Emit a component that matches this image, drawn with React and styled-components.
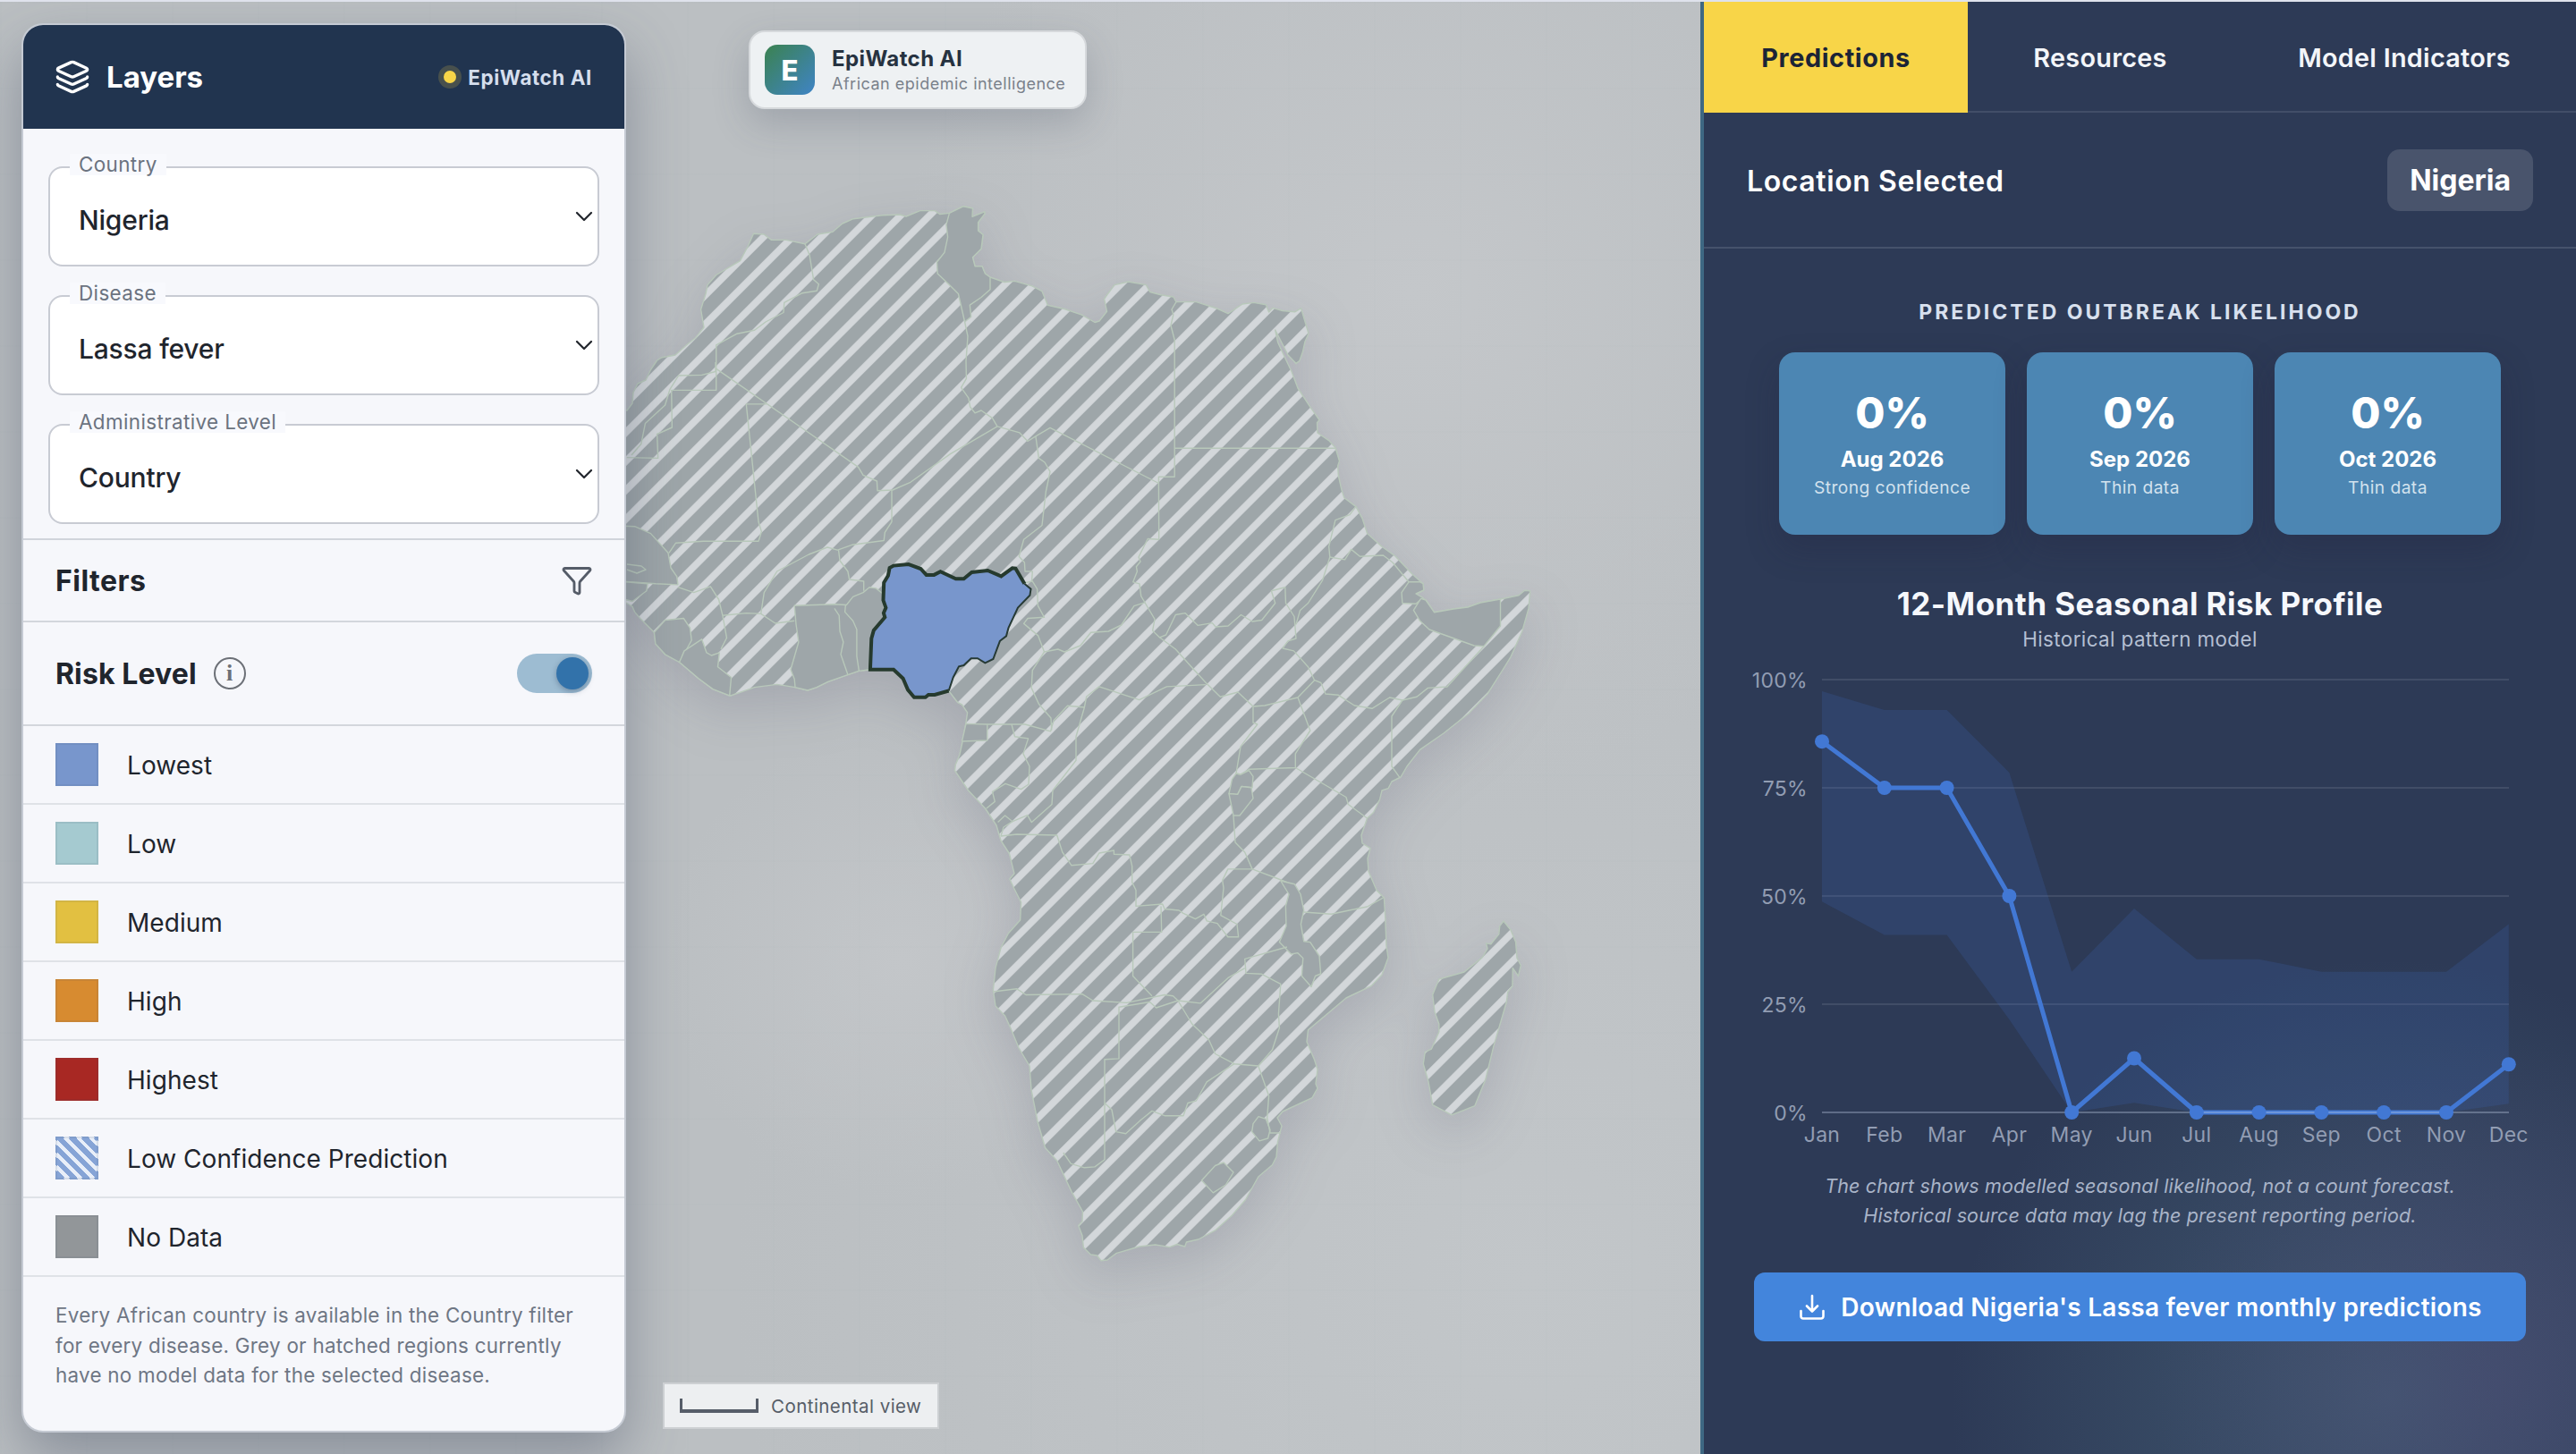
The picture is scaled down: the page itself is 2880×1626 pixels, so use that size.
import styled, { createGlobalStyle } from "styled-components";
import { Layers, Funnel, ChevronDown } from "lucide-react";

const LEVELS = [
  { label: "Lowest", color: "#7896cc" },
  { label: "Low", color: "#a5cad0" },
  { label: "Medium", color: "#e2c041" },
  { label: "High", color: "#d78b30" },
  { label: "Highest", color: "#a82823" },
  { label: "Low Confidence Prediction", hatched: true },
  { label: "No Data", color: "#929699" },
];

const FIELDS = [
  { label: "Country", value: "Nigeria" },
  { label: "Disease", value: "Lassa fever" },
  { label: "Administrative Level", value: "Country" },
];

const CARDS = [
  { month: "Aug 2026", value: "0%", note: "Strong confidence" },
  { month: "Sep 2026", value: "0%", note: "Thin data" },
  { month: "Oct 2026", value: "0%", note: "Thin data" },
];

// risk, upper bound and lower bound in percent
const SEASON = [
  { month: "Jan", risk: 85.7, high: 97.3, low: 48.7 },
  { month: "Feb", risk: 75, high: 93, low: 41 },
  { month: "Mar", risk: 75, high: 93, low: 41 },
  { month: "Apr", risk: 50, high: 78.5, low: 21.5 },
  { month: "May", risk: 0, high: 32.5, low: 0 },
  { month: "Jun", risk: 12.5, high: 47.1, low: 2.2 },
  { month: "Jul", risk: 0, high: 35.4, low: 0 },
  { month: "Aug", risk: 0, high: 35.4, low: 0 },
  { month: "Sep", risk: 0, high: 32.5, low: 0 },
  { month: "Oct", risk: 0, high: 32.5, low: 0 },
  { month: "Nov", risk: 0, high: 32.5, low: 0 },
  { month: "Dec", risk: 11.1, high: 43.5, low: 2 },
];

const MAINLAND =
  "M690 459 L701 459 707 451 708 439 713 429 722 425 727.5 413.5 734.6 403 740 399.7 755 397 768.6 385 777.5 378 787 366 783.6 346 789 328.5 791 318.6 800.7 307.5 827.5 291.7 836.4 275 842.5 261.3 854 262 862.5 268.4 879 268.4 900 272.8 914 262 931 259.3 941.8 250 954 244.7 986 240.7 1006 240 1013 242 1028.6 235.6 1045 235.6 1050.7 239.5 1061.4 238.4 1076.8 230.8 1087.5 233 1087 242.3 1100.7 236.8 1101 239 1093.6 248.6 1093.6 258 1099 262.5 1097 278.3 1087.5 287.8 1090 297.7 1098 297.7 1101.4 306 1107 310 1123 315.5 1134.6 314.3 1154 319.8 1165 325.7 1171.4 341.2 1190 345.5 1209.6 352.2 1224 360.5 1229 359 1237.5 348.3 1234.6 334.4 1236.8 331 1246 318.6 1261.4 315 1281.4 318.6 1285.7 326.5 1298 329.7 1311.8 332 1315 337.6 1337.5 337.6 1360.7 345 1373 350.6 1389 340 1401.8 338.4 1415.4 340.8 1418.6 349 1423 344.3 1434 347.5 1448 348.7 1454.6 344.7 1463 373 1459 382 1456.4 393.8 1452.9 403.6 1449 406.4 1440 397 1432.9 383 1425.7 369 1428.6 382.7 1434 394.5 1444 415.5 1451 434 1464 453.9 1475 469.7 1472.5 472.8 1473 484 1485.7 492.6 1492.9 500.5 1497.5 515.5 1495.7 521 1496.4 532 1500 548 1502.9 556.7 1516 566.6 1523 579.6 1528.6 596.6 1544.6 611 1560 622 1578.6 641.7 1591 652.7 1591.8 660 1583 664 1594 671 1603.6 684.8 1625 681 1641 679 1655 674 1677.5 670 1698 665.8 1704.6 660.3 1710.7 660.7 1709 680.4 1701.8 706 1689 734.6 1679.5 750 1663 776 1642 797.8 1614 820 1587.5 838.4 1573 857 1566 869 1556 874 1552 881.7 1545 884 1542.7 893.7 1535.6 908.5 1528.5 915 1522 934 1523 943 1532 948.7 1529 960 1530 974.5 1539 995.5 1547.4 1004 1548.8 1026.8 1550 1058 1552 1071 1545 1090 1533 1102.7 1505 1116 1483.7 1134 1462.5 1151.8 1461 1165 1469.5 1185 1473 1196 1471 1212 1473 1217 1467 1227.7 1434 1243 1428 1250 1433 1259 1428.5 1276.8 1427 1293.7 1422.4 1302.7 1406.8 1316 1392.6 1341.5 1377.5 1359 1358.6 1375.9 1339.8 1386 1326.5 1389 1324.7 1394 1316 1391.5 1307.7 1394.6 1291.6 1392 1273.7 1394 1247.7 1401.7 1238 1409 1231 1409.8 1226.5 1404 1219.4 1403 1211.4 1395 1210 1381.7 1205.7 1370.5 1210 1366 1210.5 1355 1198 1332.6 1181.7 1298 1168.5 1283.5 1160 1254 1153 1218.7 1151 1192 1139 1171.8 1129.8 1149.5 1123.6 1136 1113 1125 1110.4 1107 1113 1082.6 1119 1060 1127.4 1043.7 1140.6 1029 1141.6 1009 1133.5 993 1128.8 983 1134 976.8 1128.4 954.5 1119 940 1114 923 1101.5 904 1082.6 884 1067.5 861.6 1068.4 855 1073 843.7 1076.4 828 1080 808 1081.6 796.9 1075.5 788 1070.8 785.7 1061 773 1045 777 1038 777 1034.6 779.7 1022 779.7 1015 771.4 1009.6 758.7 999 748.8 972.9 748.8 960 750.4 947 754.8 925.7 762.3 913 768.6 903 772 889 768.6 868.6 765.4 843.6 768.6 816.8 778 797 770.6 781 758.7 759.6 740.5 743.6 731.8 732.9 720 731.4 707.3 715.7 691.5 709.6 684.4 707 678.4 700.7 674.5 690 668 Z";

const MADAGASCAR =
  "M1681 1030 L1689 1040 1694.6 1053.6 1696 1071.4 1700.3 1079.5 1697.5 1091.5 1691.3 1082.6 1690.9 1102.7 1685.7 1109.4 1684.3 1120.5 1670 1169.6 1660.7 1207.6 1648.9 1236.6 1623 1246.8 1601.7 1235.7 1597 1209.8 1591.3 1189.7 1593.2 1176.3 1600.3 1173.2 1608.8 1154 1608.8 1145 1604 1131.7 1601.7 1112.5 1608.8 1095 1637 1087 1657.4 1070.5 1663 1061 1661.6 1054.9 1666.8 1055.8 1675.8 1044.6 1676.7 1035.7 Z";

// countries without any model data
const NO_DATA = [
  // Tunisia
  "M1061.4 238.4 L1076.8 230.8 1087.5 233 1087 242.3 1100.7 236.8 1101 239 1093.6 248.6 1093.6 258 1099 262.5 1097 278.3 1087.5 287.8 1090 297.7 1098 297.7 1101.4 306 1107 310 1107 323.8 1097 332.5 1084.3 341.2 1085.7 354.2 1078.6 360 1071.4 328.5 1061.4 318.6 1048.2 306 1047.5 293 1056 282.2 1059.6 265.2 1057.9 251.4 Z",
  // Djibouti
  "M1575 650.8 L1567 662.6 1567.9 674.5 1582.9 675.3 1591 668.6 1583 664 1591.8 660 1591 652.7 1587.5 650.8 Z",
  // Somaliland
  "M1588.6 669.4 L1580.4 682.4 1587.5 694.3 1598 704 1648 722 1659 722.7 1677.5 700 1677.5 670 1655 674 1641 679 1625 681 1603.6 684.8 1594 671 Z",
  // Rwanda
  "M1382 865 L1377.5 871.4 1374 887.5 1383.7 888.4 1388 879.5 1400 880.8 1401 868.3 1396.4 861.6 1387 866 Z",
  // Burundi
  "M1374 887.5 L1379 912 1386 912 1401 892.9 1399 880.8 1388 879.5 1383.7 888.4 Z",
  // Malawi
  "M1431.8 985 L1447.4 988.8 1454 1000 1457.7 1017.8 1454.4 1033.5 1457.7 1052.7 1464.8 1053.6 1475 1069 1476.6 1089 1470.5 1091.5 1466 1103.5 1455.4 1091.5 1456.8 1071.4 1450.7 1065.6 1443.6 1067 1430.4 1053.6 1438 1035.7 1437.4 1013.4 1441 1000 Z",
  // Eswatini
  "M1407 1248.6 L1415.3 1251.3 1420 1263.4 1417.6 1273 1408 1275.9 1399.7 1265.6 1401 1256.7 Z",
  // Lesotho
  "M1368 1300 L1379 1311 1370.4 1325 1356.3 1333.9 1343.5 1320 1358.6 1303.5 Z",
  // Equatorial Guinea
  "M1080 809.4 L1103.8 810 1103.8 828 1075.5 829 Z",
  // Senegal
  "M690 588 L709.6 588.7 727.5 596.6 747 618.3 750 635 756.8 644.8 757.9 653.9 732.9 652.8 700.7 650.4 690 650 Z",
  // Guinea-Bissau
  "M690 650 L724 652.8 722.9 660.7 707 672.5 690 668 Z",
  // Sierra Leone
  "M731.4 707.3 L743.6 693.5 764.3 691.5 771.4 702.2 773.2 716 759.6 740.5 743.6 731.8 732.9 720 Z",
  // Liberia
  "M759.6 740.5 L765 727.9 784.6 714.8 790 729.9 795.4 733 804.3 729.9 802.5 745.7 817.5 757.5 815.7 778 797 770.6 781 758.7 Z",
  // Ghana, Togo and Benin
  "M888.2 677.3 L932.9 675.7 946.4 676.5 953.6 667.4 965 662.6 972 656.7 979.3 657.9 987 664 989.3 690.3 976.8 705 974.3 714 972.9 748.8 960 750.4 947 754.8 925.7 762.3 913 768.6 903 772 889 768.6 888.2 759.5 884 748.8 892.9 718 890 698 Z",
];

const BORDERS = [
  "M900 272.8 L905 285 909.6 312.7 915.4 317.8 913.2 325.3 897 327.7 876.8 338.4 876 349.5 856 360 843.6 369.2 824 373.2 800.7 385.8 800.7 436.4 750.7 436.4 751.4 478 734.6 485.5 735.7 512.4 700.7 511.6",
  "M800 405 L800 415.5 784.6 419.4 758.6 420 749 435.3 743.6 453 721.4 473.6 716.8 496.5 706 509",
  "M1078.6 360 L1082 376 1080 403.6 1080.4 423.4 1074.6 433.3 1082.9 445.2 1084.6 455 1090 461.8 1097 459 1109.6 467.7 1115 476.8 1140 483.9 1149 493.4 1157.9 487.9 1174 478.4 1294.6 540",
  "M1115 476.8 L1062.5 507.6 1017.9 539.3 997.9 548 981 548.8 980.4 538 965 531.4 959.6 522.3 900.7 481.5 800.7 412.3",
  "M1315 337.6 L1310 346 1311.8 352 1309 364 1313.2 380 1313.2 533.3 1295.4 533.3 1295.7 603.3 1283.2 602.5 1273 623 1275 628 1270.4 633.8 1271.4 639 1266.8 650.8 1274 652.8 1275.7 666.6 1280.4 674.5 1291 692.3 1288.6 705.3 1296.4 712.8 1314.3 726 1332 745.7 1348.2 763.5 1364.3 779.3 1384 774 1401 790",
  "M1313.2 501.3 L1492.9 501.3",
  "M1157.9 487.9 L1161.4 512.4 1168 517 1174 527.4 1169.3 550 1165 587.5 1144.6 603.3 1139.3 622.3 1145.4 629 1146 639 1154.3 639 1153.6 648.8 1159.6 658.7 1160.4 677.3 1167.5 690.3 1149 691.5 1144.6 697.4 1160.7 710.9 1167.5 729 1154.3 749.6 1153.2 769.4 1161.4 787.2 1175 803 1175.7 816.8",
  "M1145 652 L1154 650",
  "M1167.5 729 L1182.9 726 1190 729 1207.9 722 1219.6 707.3 1239.3 706 1253.6 699 1267.9 677.7 1280.4 673.7",
  "M1296.4 712.8 L1303.6 710 1314.3 687.5 1325 685.6 1339.3 699.4 1355.4 696.6 1359 701 1373 700 1387.5 687.5 1400 695 1410.7 693.5 1425.7 674.5 1421.4 660.7 1436.8 656.7 1437.5 674.5 1447 689.5 1449 714 1440 716.8 1434 725 1446.4 727.9 1462.5 745.7 1469.6 760.7 1451 780 1414 789 1401 790",
  "M1449 698.2 L1453.6 682.4 1462.5 674.5 1478.6 648.8 1486.8 623 1485.7 611.2 1492.9 581.6 1509 575.6 1516 566.6",
  "M1486.8 623 L1503.6 625.9 1510.7 614.4 1520.4 622.3 1546.4 621 1557 629 1575 650.8",
  "M1659 722.7 L1617.9 768 1596.4 769.4 1584 779.3 1567.9 783 1553.6 780 1534 792.3 1514.3 789 1496.4 777.3 1482 776 1476.8 763.5 1469.6 760.7",
  "M1567.9 783 L1556 801 1556 857 1565 869.6",
  "M1451 780 L1464.8 817 1448.3 842.9 1448.3 858.5 1396.4 860.3 1387 866 1382 865 1387 834.8 1405.8 810 1401 808 1401 790",
  "M1448.3 858.5 L1505 891.5 1507.3 899.5 1528.5 915",
  "M1379 912 L1381 942 1391.7 953 1400 971.9 1427 982 1438.9 986.6",
  "M1400 971.9 L1372.8 971.9 1366.7 984.4 1368 993 1364.8 1023.6 1383 1033.5 1384.6 1047.7 1372.8 1047.7 1361 1032.6 1349.2 1029.9 1345.9 1022.3 1336.5 1027.7 1323 1021.4 1318 1018 1302 1016.5 1299.7 1011 1270 1013.4 1270 995.5 1265.7 986.6 1265.7 968.7 1262.8 956 1245.4 955.3 1245.4 951 1228.9 954 1221.8 965.6 1198 967.8 1187.8 953 1181.7 934 1136.9 933 1119 935",
  "M1298 1013.4 L1298.7 1042.4 1266.6 1042.4 1266.6 1091.5 1287.9 1113.8",
  "M1110.4 1109 L1136.9 1105.8 1147 1112.5 1210 1111.6 1221.8 1119 1259.5 1121.4 1302 1112.5 1311.5 1113.8 1317 1119 1292.6 1127 1285.5 1120.5 1251 1126.3 1251 1183.9 1235 1184.8 1235 1296.8 1224 1304.9 1212.4 1305.8 1197.3 1301.3 1188.8 1289",
  "M1235 1233.5 L1243 1241 1247.7 1265.6 1258.6 1267.8 1276 1252 1287.9 1242.4 1302 1247.7 1323 1247.7 1328 1233.5 1337.4 1231 1349.2 1209.8 1379.9 1189.7",
  "M1317 1119 L1332.7 1145 1351.6 1163 1358.6 1178.5 1379.9 1189.7 1406.8 1192 1422.4 1174 1430.4 1149.5 1429.4 1134 1431.8 1100.4 1410.6 1089.3 1393 1088.4 1391.7 1072.3 1438.9 1059",
  "M1317 1119 L1342 1121.9 1372.8 1093.7 1391.7 1082.6",
  "M1406.8 1192 L1418.6 1225.4 1416.7 1250 1420 1267 1431.8 1267",
  "M1457.7 1020 L1488.4 1022.3 1509.7 1017.8 1528.5 1014 1547 1003.6",
  "M1103.8 810 L1146 810 1174.6 817.9 1178 805.8 1193.5 789.3 1212.4 791 1214.7 779 1228.9 767.9 1273.7 782.6 1304.4 767.9 1348 765.6",
  "M1131 810 L1134.5 823.7 1149.6 825.9 1144 842.9 1151 857 1150 877 1141.6 882.6 1124 876.3 1109.5 885.3 1112.3 896.4 1102.9 904",
  "M1212.4 791 L1203 823.7 1203 850.4 1177 884 1176 899.5 1153.4 919.6 1148.7 911.6 1132 918.7 1123.6 912 1115.6 919.6",
  "M1132 918.7 L1122 925 1119 935",
  "M857 451.9 L834.3 451.9 848 583.5 851.4 594.6 848 605.3 786.4 605.3 755.4 607.3 747.9 618.3",
  "M757.9 656.7 L775.7 662.6 794.3 655.9 803.6 670.5 807.9 688.3 812.5 713.3 806 725.9",
  "M807.9 688.3 L834.6 685.6 850.7 686.4 866.8 697 888.2 694.3",
  "M850.7 686.4 L854.3 662.6 868.6 639 904.3 620 925 612 936.4 615.2 952.5 609.3 988.2 604.5 989.3 595.4 997 583.5 997 548",
  "M937.5 615.2 L939 627 947.9 639 949.6 648 965.7 650 965.7 660.7",
  "M932.9 680.4 L938.2 688.3 939 706 942.9 718 940 731.8 947.9 754.4",
  "M945.4 676.5 L944.6 684.4 953.6 694.3 957.9 704 957.9 733.8 960.4 750.4",
  "M701 631 L717 633 722 637 712 641 701 637",
];

const NIGERIA_WEST =
  "M1060.7 772.5 L1045 777 1038 777 1034.6 779.7 1022 779.7 1015 771.4 1009.6 758.7 999 748.8 972.9 748.8 974.3 714 976.8 705 989.3 690.3 987.9 685.6 990.4 679.6 987.5 671.3 988.2 651.6 992.9 643.7 994.6 635 999 632.6 1015.7 631 1029.3 636 1035.7 642.9 1044.3 642.9 1051.4 639.3 1068.6 647.2 1077.5 647.2 1086.4 640 1104.3 638 1119.3 644.4 1131.8 635.3 1135.4 635.7 1145.4 652.8";
const NIGERIA_EAST =
  " 1152.5 658.7 1151.4 665.8 1138 679.6 1127.5 702.2 1125 711.3 1117.9 716.8 1110.4 737 1101.4 741.3 1092.9 736.2 1085.7 736.2 1077.5 744 1072 745.3 1065.7 757.5 1060.7 772.5";

export default function App() {
  return (
    <>
      <GlobalStyle />
      <Page>
        <MapArea>
          <AfricaMap />
          <LayersPanel />
          <Brand />
          <ScaleBar>
            <Ruler />
            Continental view
          </ScaleBar>
        </MapArea>
        <Sidebar />
      </Page>
    </>
  );
}

function AfricaMap() {
  return (
    <MapSvg viewBox="0 2 1901 1624">
      <defs>
        <pattern
          id="hatch"
          width="22.84"
          height="22.84"
          patternUnits="userSpaceOnUse"
          patternTransform="translate(1160 960) rotate(45)"
        >
          <rect width="22.84" height="22.84" fill="#9ea6a9" />
          <rect width="3.9" height="22.84" fill="#d3d7da" />
          <rect x="18.94" width="3.9" height="22.84" fill="#d3d7da" />
        </pattern>
      </defs>
      <Land>
        <path d={MAINLAND} fill="url(#hatch)" />
        <path d={MADAGASCAR} fill="url(#hatch)" />
        {NO_DATA.map((d) => (
          <path key={d} d={d} fill="#9ea6a9" />
        ))}
        {BORDERS.map((d) => (
          <path key={d} d={d} fill="none" />
        ))}
      </Land>
      <path d={NIGERIA_WEST + NIGERIA_EAST + "Z"} fill="#7896cc" />
      <path
        d={"M1145.4 652.8 L" + NIGERIA_EAST}
        fill="none"
        stroke="#263a35"
        strokeWidth="2"
      />
      <path d={NIGERIA_WEST} fill="none" stroke="#263a2e" strokeWidth="4" />
    </MapSvg>
  );
}

function LayersPanel() {
  return (
    <Panel>
      <PanelHeader>
        <Layers size={40} strokeWidth={2} />
        <PanelTitle>Layers</PanelTitle>
        <Status>
          <Dot />
          EpiWatch AI
        </Status>
      </PanelHeader>
      <Fields>
        {FIELDS.map((field) => (
          <Field key={field.label}>
            <FieldLabel>{field.label}</FieldLabel>
            <FieldValue>{field.value}</FieldValue>
            <ChevronDown size={32} strokeWidth={1.7} />
          </Field>
        ))}
      </Fields>
      <SectionRow $height={92}>
        <SectionTitle $spacing={0.5}>Filters</SectionTitle>
        <FilterIcon>
          <Funnel size={36} strokeWidth={1.9} />
        </FilterIcon>
      </SectionRow>
      <SectionRow $height={116}>
        <SectionTitle $spacing={0.1}>Risk Level</SectionTitle>
        <Info>i</Info>
        <Toggle>
          <Thumb />
        </Toggle>
      </SectionRow>
      <ul>
        {LEVELS.map((level) => (
          <LevelRow key={level.label}>
            <Swatch $color={level.color} $hatched={level.hatched} />
            <LevelName>{level.label}</LevelName>
          </LevelRow>
        ))}
      </ul>
      <PanelNote>
        Every African country is available in the Country filter
        <br />
        for every disease. Grey or hatched regions currently
        <br />
        have no model data for the selected disease.
      </PanelNote>
    </Panel>
  );
}

function Brand() {
  return (
    <BrandCard>
      <Logo>E</Logo>
      <div>
        <BrandName>EpiWatch AI</BrandName>
        <BrandTag>African epidemic intelligence</BrandTag>
      </div>
    </BrandCard>
  );
}

function Sidebar() {
  return (
    <Side>
      <Tabs>
        <Tab $active>Predictions</Tab>
        <Tab>Resources</Tab>
        <Tab>Model Indicators</Tab>
      </Tabs>
      <Location>
        <LocationLabel>Location Selected</LocationLabel>
        <LocationBadge>Nigeria</LocationBadge>
      </Location>
      <Overline>PREDICTED OUTBREAK LIKELIHOOD</Overline>
      <Cards>
        {CARDS.map((card) => (
          <Card key={card.month}>
            <CardValue>{card.value}</CardValue>
            <CardMonth>{card.month}</CardMonth>
            <CardNote>{card.note}</CardNote>
          </Card>
        ))}
      </Cards>
      <ChartTitle>12-Month Seasonal Risk Profile</ChartTitle>
      <ChartSubtitle>Historical pattern model</ChartSubtitle>
      <SeasonChart />
      <ChartNote>
        The chart shows modelled seasonal likelihood, not a count forecast.
        <br />
        Historical source data may lag the present reporting period.
      </ChartNote>
      <DownloadButton>
        <svg
          width="32"
          height="32"
          viewBox="0 0 32 32"
          fill="none"
          stroke="currentColor"
          strokeWidth="2.6"
          strokeLinecap="round"
          strokeLinejoin="round"
        >
          <path d="M16 3v17M10 14.500l6 6 6-6M3.500 20v6a2.500 2.500 0 0 0 2.500 2.500h20a2.500 2.500 0 0 0 2.500-2.500v-6" />
        </svg>
        Download Nigeria's Lassa fever monthly predictions
      </DownloadButton>
    </Side>
  );
}

function SeasonChart() {
  const x = (i) => 132 + i * 69.8;
  const y = (v) => 504 - v * 4.84;
  const points = (key) => SEASON.map((s, i) => `${x(i)},${y(s[key])}`);
  const band = [...points("high"), ...points("low").reverse()].join(" ");

  return (
    <Chart viewBox="0 0 975 560">
      {[100, 75, 50, 25, 0].map((tick) => (
        <g key={tick}>
          {tick > 0 && (
            <line x1="132" x2="900" y1={y(tick)} y2={y(tick)} stroke="#414d67" strokeWidth="2" />
          )}
          <text x="116" y={y(tick) + 9} textAnchor="end">
            {tick}%
          </text>
        </g>
      ))}
      <polygon points={band} fill="rgba(62, 106, 190, 0.2)" />
      <polyline
        points={points("risk").join(" ")}
        fill="none"
        stroke="#4278d4"
        strokeWidth="5"
        strokeLinejoin="round"
      />
      <line x1="132" x2="900" y1={y(0)} y2={y(0)} stroke="rgba(190, 203, 225, 0.35)" strokeWidth="2" />
      {SEASON.map((s, i) => (
        <g key={s.month}>
          <circle cx={x(i)} cy={y(s.risk)} r="8" fill="#4278d4" />
          <text x={x(i)} y="537" textAnchor="middle">
            {s.month}
          </text>
        </g>
      ))}
    </Chart>
  );
}

const GlobalStyle = createGlobalStyle`
  * {
    box-sizing: border-box;
    margin: 0;
    padding: 0;
  }

  body {
    font-family: Inter, "Liberation Sans", sans-serif;
    color: #1f252d;
    overflow: hidden;
  }

  ul {
    list-style: none;
  }
`;

const Page = styled.main`
  display: flex;
  width: 2880px;
  height: 1626px;
  border-top: 2px solid #dfe2ec;
`;

const MapArea = styled.section`
  position: relative;
  flex: 1;
  overflow: hidden;
  background:
    linear-gradient(rgba(150, 165, 160, 0.03) 2px, transparent 2px) 0 0 / 96px 96px,
    linear-gradient(90deg, rgba(150, 165, 160, 0.03) 2px, transparent 2px) 0 0 / 96px 96px,
    radial-gradient(circle at 83% 20%, #c4c7ca, transparent 28%),
    radial-gradient(circle at 53% 66%, #c3c6c9, transparent 18%),
    radial-gradient(circle at 90% 88%, #c2c6c9, transparent 40%),
    #bbbfc2;
`;

const MapSvg = styled.svg`
  display: block;
  width: 1901px;
  height: 1624px;
`;

const Land = styled.g`
  stroke: #b8c8ba;
  stroke-width: 1.4;
  stroke-linejoin: round;
  filter: drop-shadow(0 20px 28px rgba(80, 80, 105, 0.2));
`;

const Panel = styled.aside`
  position: absolute;
  top: 24px;
  left: 24px;
  width: 676px;
  height: 1576px;
  overflow: hidden;
  background: #f6f7fb;
  border: 2px solid #c5cad3;
  border-radius: 24px;
  box-shadow: 0 28px 64px rgba(55, 65, 90, 0.38);
`;

const PanelHeader = styled.header`
  display: flex;
  align-items: center;
  height: 116px;
  padding: 0 36px 0 35px;
  background: #21344f;
  color: white;
`;

const PanelTitle = styled.h1`
  margin-left: 18px;
  font-size: 33px;
  font-weight: 700;
`;

const Status = styled.div`
  display: flex;
  align-items: center;
  gap: 13px;
  margin-left: auto;
  font-size: 22.400px;
  font-weight: 700;
  letter-spacing: 0.6px;
  color: #d5deed;
`;

const Dot = styled.span`
  width: 14px;
  height: 14px;
  border-radius: 50%;
  background: #f8d548;
  box-shadow: 0 0 0 6px rgba(248, 213, 72, 0.18);
`;

const Fields = styled.div`
  display: flex;
  flex-direction: column;
  gap: 32px;
  padding: 42px 28px 16px;
  border-bottom: 2px solid #d0d4db;
`;

const Field = styled.div`
  position: relative;
  display: flex;
  align-items: center;
  justify-content: space-between;
  height: 112px;
  padding: 0 0 0 32px;
  background: white;
  border: 2px solid #c8cbd3;
  border-radius: 16px;

  svg {
    margin-right: -1px;
    color: #23272e;
  }
`;

const FieldLabel = styled.span`
  position: absolute;
  top: -16px;
  left: 22px;
  padding: 0 10px;
  font-size: 22.400px;
  line-height: 24px;
  letter-spacing: 0.4px;
  color: #6b7380;
  background: #f8f9fd;
`;

const FieldValue = styled.span`
  padding-top: 8px;
  font-size: 30px;
  font-weight: 500;
  letter-spacing: -0.2px;
`;

const SectionRow = styled.div`
  display: flex;
  align-items: center;
  height: ${(props) => props.$height}px;
  padding: 0 36px;
  border-bottom: 2px solid #d3d6dc;
`;

const SectionTitle = styled.h2`
  font-size: 32px;
  font-weight: 700;
  letter-spacing: ${(props) => props.$spacing}px;
`;

const FilterIcon = styled.span`
  display: flex;
  margin-left: auto;
  margin-right: -1px;
  color: #555c68;
`;

const Info = styled.span`
  display: flex;
  align-items: center;
  justify-content: center;
  width: 36px;
  height: 36px;
  margin-left: 19px;
  border: 2px solid #6c7077;
  border-radius: 50%;
  font: 700 26px "Liberation Serif", serif;
  color: #6c7077;
`;

const Toggle = styled.span`
  display: flex;
  align-items: center;
  justify-content: flex-end;
  width: 84px;
  height: 44px;
  margin-left: auto;
  padding-right: 4px;
  border-radius: 22px;
  background: #9dbcd2;
`;

const Thumb = styled.span`
  width: 36px;
  height: 36px;
  border-radius: 50%;
  background: #3272aa;
  box-shadow: 0 2px 6px rgba(30, 50, 80, 0.35);
`;

const LevelRow = styled.li`
  display: flex;
  align-items: center;
  gap: 32px;
  height: 88px;
  padding: 0 36px;
  border-bottom: 2px solid #dfe2e7;
  font-size: 28px;
`;

const LevelName = styled.span`
  padding-top: 2px;
  letter-spacing: 0.05px;
`;

const Swatch = styled.span`
  width: 48px;
  height: 48px;
  border: 2px solid rgba(70, 90, 110, 0.1);
  background: ${(props) =>
    props.$hatched
      ? "repeating-linear-gradient(45deg, #86a4d6 0 6px, #e8eef8 6px 10px)"
      : props.$color};
`;

const PanelNote = styled.p`
  padding: 26px 36px;
  font-size: 22.400px;
  line-height: 33.600px;
  letter-spacing: 0.27px;
  color: #6e7684;
`;

const BrandCard = styled.div`
  position: absolute;
  top: 32px;
  left: 837px;
  display: flex;
  align-items: center;
  gap: 19px;
  width: 378px;
  height: 88px;
  padding: 0 16px;
  background: #eef1f3;
  border: 2px solid #d6d9dc;
  border-radius: 18px;
  box-shadow: 0 16px 40px rgba(60, 70, 90, 0.22);
`;

const Logo = styled.span`
  display: flex;
  align-items: center;
  justify-content: center;
  width: 56px;
  height: 56px;
  border-radius: 14px;
  background: linear-gradient(135deg, #3b8250, #3f84c6);
  color: white;
  font-size: 31px;
  font-weight: 800;
`;

const BrandName = styled.p`
  font-size: 24px;
  font-weight: 700;
  line-height: 29px;
  letter-spacing: 0.4px;
  color: #263240;
`;

const BrandTag = styled.p`
  padding-top: 1px;
  font-size: 18px;
  line-height: 25px;
  letter-spacing: 0.5px;
  color: #7a818b;
`;

const ScaleBar = styled.div`
  position: absolute;
  top: 1544px;
  left: 741px;
  display: flex;
  align-items: center;
  gap: 14px;
  width: 309px;
  height: 52px;
  padding: 0 17px;
  background: #edeff1;
  border: 2px solid #cdd0d3;
  font-size: 20.500px;
  letter-spacing: 0.45px;
  white-space: nowrap;
  color: #565d67;
`;

const Ruler = styled.span`
  width: 88px;
  height: 16px;
  border: solid #565d69;
  border-width: 0 3px 4px;
`;

const Side = styled.aside`
  display: flex;
  flex-direction: column;
  width: 979px;
  border-left: 4px solid #3e6883;
  background:
    radial-gradient(circle 380px at 880px 1540px, rgba(84, 70, 120, 0.34), transparent),
    radial-gradient(circle 490px at 765px 1560px, rgba(88, 125, 145, 0.44), transparent),
    #2d3a56;
`;

const Tabs = styled.nav`
  display: grid;
  grid-template-columns: 295px 296px 1fr;
  height: 124px;
`;

const Tab = styled.button`
  padding-top: 2px;
  border: 0;
  border-bottom: 2px solid ${(props) => (props.$active ? "#f8d548" : "#424e68")};
  background: ${(props) => (props.$active ? "#f8d548" : "transparent")};
  color: ${(props) => (props.$active ? "#1c2436" : "#f3f5f9")};
  font: inherit;
  font-size: 28.800px;
  font-weight: ${(props) => (props.$active ? 700 : 600)};
  letter-spacing: ${(props) => (props.$active ? 0.6 : 0.28)}px;
`;

const Location = styled.div`
  display: flex;
  align-items: center;
  justify-content: space-between;
  height: 152px;
  padding: 0 48px;
  border-bottom: 2px solid #46526c;
  color: white;
`;

const LocationLabel = styled.span`
  padding-top: 2px;
  font-size: 32px;
  font-weight: 600;
  letter-spacing: 0.6px;
`;

const LocationBadge = styled.span`
  padding: 0 25px;
  border-radius: 14px;
  background: #49546c;
  font-size: 32px;
  font-weight: 700;
  line-height: 69px;
`;

const Overline = styled.h3`
  margin: 58px 0 32px;
  text-align: center;
  font-size: 23px;
  font-weight: 700;
  line-height: 26px;
  letter-spacing: 3px;
  color: #d8e0ee;
`;

const Cards = styled.div`
  display: grid;
  grid-template-columns: repeat(3, 253px);
  gap: 24px;
  justify-content: center;
`;

const Card = styled.div`
  display: flex;
  flex-direction: column;
  align-items: center;
  justify-content: center;
  height: 204px;
  padding-top: 3px;
  border-radius: 18px;
  background: #4c86b3;
  box-shadow: 0 16px 36px rgba(30, 30, 60, 0.25);
  color: white;
`;

const CardValue = styled.strong`
  font-size: 48px;
  font-weight: 800;
  line-height: 48px;
`;

const CardMonth = styled.span`
  margin: 13px 0 5px;
  font-size: 24px;
  font-weight: 700;
  line-height: 29px;
`;

const CardNote = styled.span`
  font-size: 19.200px;
  line-height: 24px;
  letter-spacing: 0.45px;
  color: #d3e2ee;
`;

const ChartTitle = styled.h2`
  margin-top: 57px;
  text-align: center;
  font-size: 35px;
  font-weight: 700;
  line-height: 41px;
  letter-spacing: 0.45px;
  color: #f6f8fc;
`;

const ChartSubtitle = styled.p`
  margin-top: 5px;
  text-align: center;
  font-size: 22.400px;
  line-height: 28px;
  letter-spacing: 0.4px;
  color: #b4bfd2;
`;

const Chart = styled.svg`
  width: 975px;
  height: 560px;
  margin-top: 11px;
  flex-shrink: 0;

  text {
    font-size: 23px;
    letter-spacing: 0.3px;
    fill: #929db3;
  }
`;

const ChartNote = styled.p`
  margin-top: 10px;
  text-align: center;
  font-size: 21.500px;
  font-style: italic;
  line-height: 32.500px;
  letter-spacing: 0.15px;
  color: #a9b4c8;
`;

const DownloadButton = styled.button`
  display: flex;
  align-items: center;
  justify-content: center;
  gap: 16px;
  align-self: center;
  width: 863px;
  height: 77px;
  margin-top: 48px;
  border: 0;
  border-radius: 12px;
  background: #4385dc;
  color: white;
  font: inherit;
  font-size: 28px;
  font-weight: 600;
  letter-spacing: 0.25px;
`;
